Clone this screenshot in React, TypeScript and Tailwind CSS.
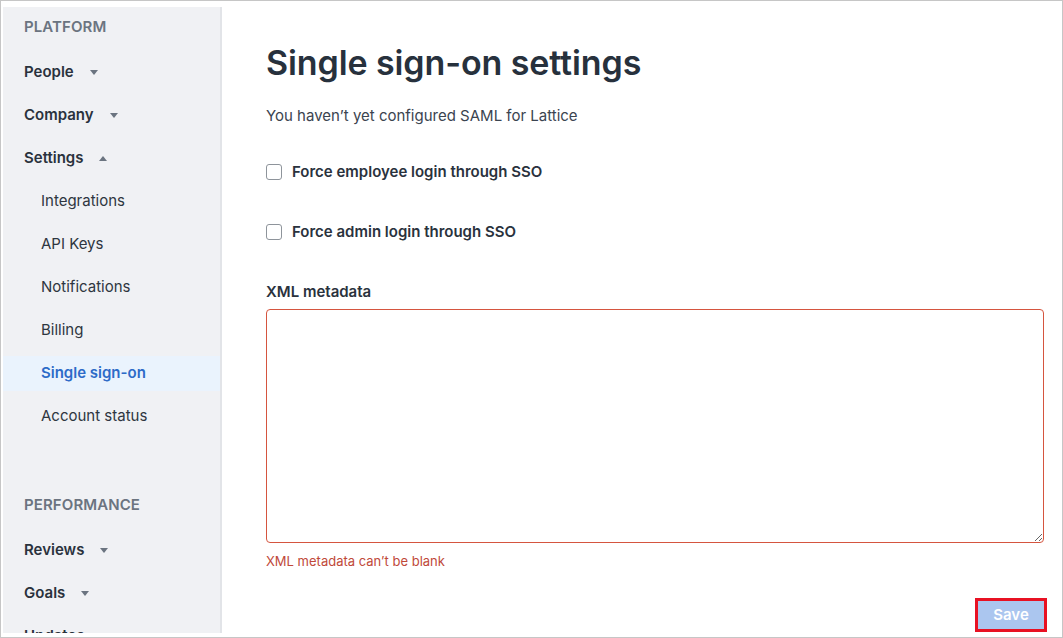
import React from "react";

const Caret = ({ up = false }: { up?: boolean }) => (
  <svg width="8" height="5" viewBox="0 0 8 5" className="ml-[16px] shrink-0">
    {up ? <path d="M0 5 L4 0 L8 5 Z" fill="#6b7480" /> : <path d="M0 0 L8 0 L4 5 Z" fill="#6b7480" />}
  </svg>
);

const Top = ({ label, caret }: { label: string; caret?: "up" | "down" }) => (
  <div className="h-[35px] my-[4px] shrink-0 flex items-center pl-[21px] text-[15px] font-semibold text-[#2a323d]">
    <span>{label}</span>
    {caret && <Caret up={caret === "up"} />}
  </div>
);

const Sub = ({ label, active = false }: { label: string; active?: boolean }) => (
  <div
    className={
      "h-[35px] my-[4px] shrink-0 flex items-center pl-[38px] text-[15px] " +
      (active ? "bg-[#eaf3fd] text-[#2d6bc8] font-semibold" : "text-[#2e3640]")
    }
  >
    {label}
  </div>
);

const Header = ({ label, className = "" }: { label: string; className?: string }) => (
  <div className={"shrink-0 pl-[21px] leading-[20px] text-[15px] font-semibold tracking-[0.1px] text-[#6b7480] uppercase " + className}>
    {label}
  </div>
);

const Check = ({ label, className = "" }: { label: string; className?: string }) => (
  <label className={"flex items-center h-[20px] " + className}>
    <span className="w-[16px] h-[16px] rounded-[3px] border border-[#8e949b] bg-white shrink-0" />
    <span className="ml-[10px] text-[15px] font-semibold text-[#2a323d]">{label}</span>
  </label>
);

export default function App() {
  return (
    <div
      className="w-[1063px] h-[638px] border border-[#c6c6c6] bg-white flex pt-[6px] pl-[2px] pb-[4px] overflow-hidden"
      style={{ fontFamily: "Inter, 'Noto Sans', sans-serif" }}
    >
      <aside className="w-[219px] shrink-0 h-full flex flex-col bg-[#f0f1f4] border-r-2 border-[#e2e4e8] overflow-hidden">
        <Header label="Platform" className="pt-[10px] pb-[13.5px]" />
        <Top label="People" caret="down" />
        <Top label="Company" caret="down" />
        <Top label="Settings" caret="up" />
        <Sub label="Integrations" />
        <Sub label="API Keys" />
        <Sub label="Notifications" />
        <Sub label="Billing" />
        <Sub label="Single sign-on" active />
        <Sub label="Account status" />
        <Header label="Performance" className="pt-[57.5px] pb-[13.5px]" />
        <Top label="Reviews" caret="down" />
        <Top label="Goals" caret="down" />
        <Top label="Updates" caret="down" />
      </aside>
      <main className="flex-1 flex flex-col pl-[44px] pr-[18px]">
        <h1 className="mt-[36px] leading-[40px] text-[34px] font-semibold text-[#27313d] tracking-[-0.1px]">
          Single sign-on settings
        </h1>
        <p className="mt-[23px] leading-[20px] text-[15px] text-[#3b4450]">
          You haven’t yet configured SAML for Lattice
        </p>
        <Check label="Force employee login through SSO" className="mt-[36px]" />
        <Check label="Force admin login through SSO" className="mt-[40px]" />
        <div className="mt-[40px] leading-[20px] text-[15px] font-semibold text-[#2a323d]">XML metadata</div>
        <textarea className="mt-[7px] h-[234px] w-full rounded-[4px] border border-[#d5553f] bg-white outline-none resize-y" />
        <div className="mt-[10px] leading-[16px] text-[13px] text-[#c0493a]">XML metadata can’t be blank</div>
        <div className="mt-[29px] mr-[-3px] self-end border-[3px] border-[#e81123]">
          <button className="w-[66px] h-[28px] bg-[#abc6ef] text-white text-[15px] font-semibold flex items-center justify-center">
            Save
          </button>
        </div>
      </main>
    </div>
  );
}
